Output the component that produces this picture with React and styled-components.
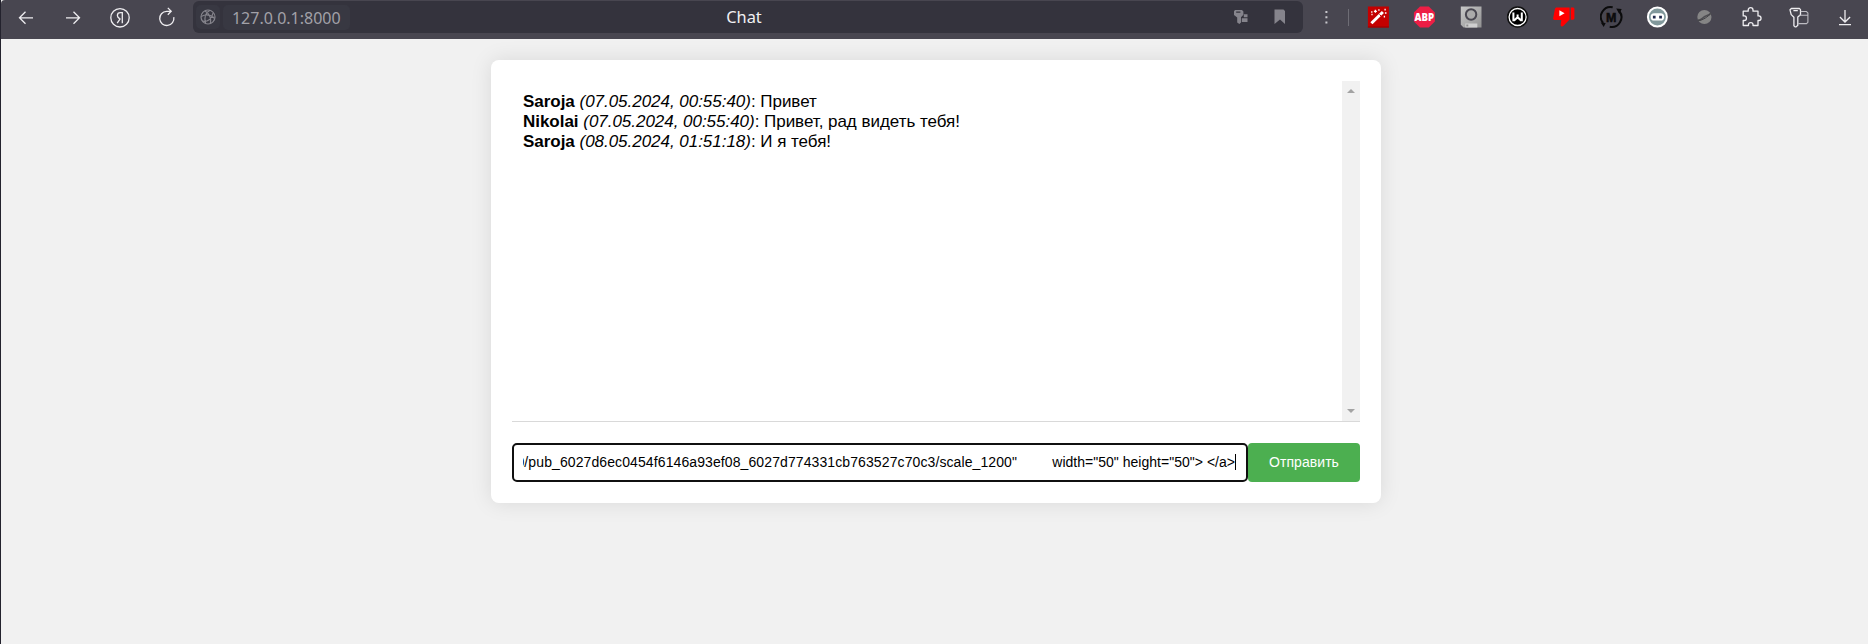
import React from "react";
import styled, { createGlobalStyle } from "styled-components";

const GlobalStyle = createGlobalStyle`
  * { box-sizing: border-box; }
  body { margin: 0; background: #f1f1f1; font-family: "Liberation Sans", Arial, sans-serif; }
`;

const Window = styled.div`
  height: 644px;
  border-left: 1px solid #23222d;
  background: #f1f1f1;
  overflow: hidden;
`;

const Toolbar = styled.header`
  display: flex;
  align-items: flex-start;
  height: 39px;
  padding-left: 2px;
  background: #484650;
  border-radius: 4px 0 0 0;
`;

const IconStrip = styled.nav`
  display: grid;
  grid-template-columns: repeat(${(p) => p.$count}, 46.6px);
  justify-items: center;
  align-items: center;
  height: 33px;
  flex: none;
`;

const IconButton = styled.button`
  display: flex;
  padding: 0;
  border: 0;
  background: none;
`;

const Icon = styled.svg`
  display: block;
  width: 24px;
  height: 24px;
  fill: none;
  stroke: ${(p) => p.$color || "#eeedf0"};
  stroke-width: ${(p) => p.$weight || 1.3};
`;

const AddressBar = styled.div`
  display: grid;
  grid-template-columns: 1fr auto 1fr;
  align-items: center;
  width: 1110px;
  height: 32px;
  margin: 1px 0 0 3.6px;
  padding: 0 11px 0 3px;
  border-radius: 6px;
  background: #34333d;
`;

const SiteInfo = styled.div`
  display: flex;
  align-items: center;
  gap: 3px;
`;

const SiteTile = styled.div`
  display: flex;
  align-items: center;
  justify-content: center;
  width: 24px;
  height: 24px;
  border-radius: 5px;
  background: #383842;
`;

const Url = styled.div`
  height: 25px;
  padding: 0 9px;
  border-radius: 5px;
  background: #383842;
  color: #a2a1a8;
  font: 16px/27px "Noto Sans", "Open Sans", sans-serif;
`;

const PageTitle = styled.div`
  color: #f0f0f2;
  font: 16.4px/30px "Noto Sans", "Open Sans", sans-serif;
  padding-left: 0;
`;

const AddressActions = styled.div`
  display: flex;
  justify-content: flex-end;
  gap: 15px;
`;

const MenuArea = styled.div`
  display: flex;
  align-items: center;
  flex: 1;
  height: 33px;
  padding-left: 11px;
`;

const Divider = styled.i`
  width: 1px;
  height: 17px;
  margin: 2px 0 0 10px;
  background: #6e6d75;
`;

const Card = styled.main`
  display: flex;
  flex-direction: column;
  width: 890px;
  height: 443px;
  margin: 21px 0 0 490px;
  padding: 21px;
  border-radius: 8px;
  background: #fff;
  box-shadow: 0 0 21px rgba(0, 0, 0, 0.1);
`;

const ChatLog = styled.section`
  display: flex;
  flex: none;
  height: 341px;
  border-bottom: 1px solid #d9d9d9;
`;

const Messages = styled.div`
  flex: 1;
  padding: 11px;
  color: #000;
  font-size: 17px;
  line-height: 20px;
  letter-spacing: -0.03px;
`;

const Message = styled.div`
  white-space: nowrap;
`;

const Scrollbar = styled.div`
  display: flex;
  flex-direction: column;
  justify-content: space-between;
  align-items: center;
  width: 18px;
  padding: 8px 0;
  background: #f1f1f1;
`;

const Arrow = styled.i`
  width: 0;
  height: 0;
  border: 4px solid transparent;
  border-top-width: ${(p) => (p.$up ? 0 : "4px")};
  border-bottom-width: ${(p) => (p.$up ? "4px" : 0)};
  border-${(p) => (p.$up ? "bottom" : "top")}-color: #a3a3a3;
`;

const Composer = styled.form`
  display: flex;
  flex: none;
  height: 39px;
  margin-top: 21px;
`;

const Field = styled.div`
  width: 736px;
  padding: 0 10px 0 9px;
  border: 2px solid #101010;
  border-radius: 5px;
  background: #fff;
`;

const FieldText = styled.div`
  display: flex;
  justify-content: flex-end;
  align-items: center;
  height: 35px;
  padding-bottom: 2px;
  overflow: hidden;
  white-space: pre;
  font-size: 14px;
  color: #000;
`;

const FieldPart = styled.span`
  flex: none;
  letter-spacing: ${(p) => p.$tracking};
`;

const Caret = styled.i`
  flex: none;
  width: 1px;
  height: 16px;
  background: #000;
`;

const SendButton = styled.button`
  width: 112px;
  padding: 0 0 2px;
  border: 0;
  border-radius: 4px;
  background: #4caf50;
  color: #fff;
  font: 14px "Liberation Sans", Arial, sans-serif;
  letter-spacing: 0.05px;
`;

const messages = [
  { name: "Saroja", time: "07.05.2024, 00:55:40", text: "Привет" },
  { name: "Nikolai", time: "07.05.2024, 00:55:40", text: "Привет, рад видеть тебя!" },
  { name: "Saroja", time: "08.05.2024, 01:51:18", text: "И я тебя!" },
];

const navIcons = [
  <Icon key="back" viewBox="0 0 24 24"><path d="M19 12.8H5.5M11.5 6.8l-6 6 6 6" /></Icon>,
  <Icon key="forward" viewBox="0 0 24 24"><path d="M5 12.8h13.5M12.5 6.8l6 6-6 6" /></Icon>,
  <Icon key="ya" viewBox="-1 0 24 24">
    <circle cx="12" cy="12.8" r="9.2" />
    <path d="M14.3 18.2V7.7h-1.9c-2 0-3 1.1-3 2.7 0 1.5.8 2.3 2.1 3.2l1 .6M12.3 13.6l-3.1 4.6" />
  </Icon>,
  <Icon key="reload" viewBox="-1 0 24 24">
    <path d="M18.8 12.2A7.1 7.1 0 1 1 11.5 6.3h4.6M12.8 2.9l3.4 3.4-3.4 3.4" />
  </Icon>,
];

const extensionIcons = [
  <Icon key="wand" viewBox="0.6 0 24 24" $color="#fff">
    <path fill="#c40000" stroke="none" d="M1.5 1.5h21v21h-21z" />
    <path fill="#970000" stroke="none" d="M1.5 21.5h21v1h-21z" />
    <path strokeWidth="3" d="M5 18.2L16.5 7" />
    <path stroke="#c40000" strokeWidth="1" d="M13.1 9.4l1.5 1.6" />
    <path strokeWidth="1.3" d="M9 4.8v3M7.5 6.3h3M12.5 4.2v1.6M5.4 6.2v1.6M18.7 3.8v1.6M18 10.8v1.6M18.5 8h1.6M5 9.5h1.2" />
  </Icon>,
  <Icon key="abp" viewBox="0.6 0 24 24" $color="none">
    <path fill="#ed1e45" d="M7.6 1.5h8.8l6.1 6.1v8.8l-6.1 6.1H7.6l-6.1-6.1V7.6z" />
    <text x="12" y="16" textAnchor="middle" fill="#fff" fontFamily="Open Sans, sans-serif" fontWeight="800" fontSize="10.6" textLength="19.6" lengthAdjust="spacingAndGlyphs">ABP</text>
  </Icon>,
  <Icon key="disk" viewBox="1.2 0 24 24">
    <defs>
      <linearGradient id="metal" x1="0" y1="0" x2="1" y2="1">
        <stop offset="0" stopColor="#c8c8c8" /><stop offset="1" stopColor="#929292" />
      </linearGradient>
    </defs>
    <path fill="url(#metal)" stroke="none" d="M2 1.5h20.7v21H4.8L2 19.8z" />
    <circle cx="12.3" cy="9.5" r="5.2" stroke="#494751" strokeWidth="2" fill="#aaa" />
    <path fill="#cfcfcf" stroke="none" d="M6.5 18.5h12v4h-12z" />
    <path fill="#8d8d8d" stroke="none" d="M7.5 19.5h2v2h-2z" />
  </Icon>,
  <Icon key="w" viewBox="1.4 0 24 24" $color="#fff">
    <circle cx="12" cy="12" r="10.1" fill="#000" stroke="#111" />
    <circle cx="12" cy="12" r="8.5" strokeWidth="1.3" />
    <path strokeWidth="2" d="M7.8 7.6v7.6h1l3.2-3 3.2 3h1V7.6M12 9.6v3" />
  </Icon>,
  <Icon key="dislike" viewBox="1.2 0 24 24" $color="none">
    <path fill="#f00" d="M5 2.5h12.8v12L11.5 21c-1 1-2.8.4-2.7-1.1l.7-5H2.8c-1.1 0-1.7-.8-1.4-1.8L3.1 4c.2-.9.9-1.5 1.9-1.5zM19 2.5h2.2c.8 0 1.4.6 1.4 1.4v9.4c0 .8-.6 1.4-1.4 1.4H19z" />
    <path fill="#fff" d="M7.6 5.3v6l5.2-3z" />
  </Icon>,
  <Icon key="m" viewBox="0.8 0 24 24" $color="#0b0b0c">
    <path strokeWidth="2" d="M13.5 2.2A9.8 9.8 0 0 0 3.9 18M10.5 21.8A9.8 9.8 0 0 0 20 6" />
    <path fill="#0b0b0c" stroke="none" d="M17 3.5l5.5.4-2.4 5zM1.5 17.5l5 .5-2 3.9z" />
    <text x="12" y="16.5" textAnchor="middle" fill="#0b0b0c" stroke="#0b0b0c" strokeWidth=".5" fontFamily="Liberation Sans, sans-serif" fontWeight="700" fontSize="12.5">M</text>
  </Icon>,
  <Icon key="robot" viewBox="0.6 0 24 24" $color="#fff">
    <circle cx="12" cy="12" r="9.5" fill="#81989b" strokeWidth="2" />
    <rect x="5.2" y="8.2" width="13.6" height="7.4" rx="3.7" fill="#fff" stroke="none" />
    <path fill="#202a4c" stroke="none" d="M7.5 10.8h2.7v2.7H7.5zM13.8 10.8h2.7v2.7h-2.7z" />
  </Icon>,
  <Icon key="sphere" viewBox="0.6 0 24 24" $color="#55555a">
    <circle cx="12" cy="12" r="7.1" fill="#858585" stroke="none" />
    <path stroke="#4e4e52" strokeWidth="1.7" d="M5.2 15.4c3 .2 4.4-1.8 6.3-3.3 2-1.6 4.2-1.1 7.1-4" />
    <path stroke="#444448" strokeWidth="1" d="M5.3 15.2c2.2 1.2 8.6-1.9 12.4-6.1" />
  </Icon>,
  <Icon key="extensions" viewBox="1 0 24 24">
    <path strokeLinejoin="round" d="M4.2 6.2h5V5.1c0-3.2 4.8-3.2 4.8 0v1.1h5v4.7h.8c3 0 3 4.6 0 4.6H19v5h-5v-1c0-2.5-4.5-2.5-4.5 0v1H4.2v-5h1.2c2.7 0 2.7-4.6 0-4.6H4.2z" />
  </Icon>,
  <Icon key="passwords" viewBox="-1.2 0 24 24">
    <path strokeLinejoin="round" d="M4.2 3.5h8l1.1 1.1v5.1L10.6 12v8.2l-1.7 1.7h-1l-1.2-1.2v-8.4L4 9.6 2.8 4.8zM6.2 5.7h4.4" />
    <path stroke="#bdbcc2" strokeWidth="1.1" d="M13.5 6.5h5.7l1.5 1.4v9.4l-1.4 1.3h-8.2M12.2 10.2h8.3" />
  </Icon>,
  <Icon key="downloads" viewBox="0 0 24 24"><path d="M12 5v12M6.9 12l5.1 5 5.1-5M6 19.6h12" /></Icon>,
];

export default function App() {
  return (
    <>
      <GlobalStyle />
      <Window>
        <Toolbar>
          <IconStrip $count={4}>
            {navIcons.map((icon) => <IconButton key={icon.key}>{icon}</IconButton>)}
          </IconStrip>
          <AddressBar>
            <SiteInfo>
              <SiteTile>
                <Icon viewBox="0 0 24 24" $color="#85848c" $weight={1.2}>
                  <circle cx="12" cy="12" r="7" />
                  <path d="M5.2 11.5c4.3-2.3 9.5-1.7 13.5 2M6.6 16.2c5 .8 9.2-2.2 10.4-8M14 5.2C9.6 7.5 8 12.5 9.6 18.6M8.8 5.7c4.6 3 6.6 7.4 5.6 13" />
                </Icon>
              </SiteTile>
              <Url>127.0.0.1:8000</Url>
            </SiteInfo>
            <PageTitle>Chat</PageTitle>
            <AddressActions>
              <Icon viewBox="0 0 24 24" $color="none">
                <path fill="#85848c" fillRule="evenodd" d="M6 5h7l1.4 1.4v3.4L12 12.2v5.3L10.4 19 8.2 17.5v-5L5 10V6.3zM7.2 6.5v1.3h4.2V6.5z" />
                <path fill="#85848c" d="M14.8 9.3h3.7v3h-3.7zM12.8 13.2h5.7v3.7h-5.7z" />
              </Icon>
              <Icon viewBox="0 0 24 24" $color="none"><path fill="#85848c" d="M6.5 4.5h9L17 6v13l-5-4.6L6.5 19z" /></Icon>
            </AddressActions>
          </AddressBar>
          <MenuArea>
            <Icon viewBox="0 0 24 24" $color="none">
              <path fill="#c8c7cc" d="M11.4 6h2v2h-2zM11.4 11.2h2v2h-2zM11.4 16.4h2v2h-2z" />
            </Icon>
            <Divider />
          </MenuArea>
          <IconStrip $count={11}>
            {extensionIcons.map((icon) => <IconButton key={icon.key}>{icon}</IconButton>)}
          </IconStrip>
        </Toolbar>
        <Card>
          <ChatLog>
            <Messages>
              {messages.map((m) => (
                <Message key={m.time + m.name}>
                  <b>{m.name}</b> <em>({m.time})</em>: {m.text}
                </Message>
              ))}
            </Messages>
            <Scrollbar><Arrow $up /><Arrow /></Scrollbar>
          </ChatLog>
          <Composer>
            <Field>
              <FieldText>
                <FieldPart $tracking="0.1px">{'0/pub_6027d6ec0454f6146a93ef08_6027d774331cb763527c70c3/scale_1200"'}</FieldPart>
                <FieldPart $tracking="0.02px">{'         width="50" height="50"> </a>'}</FieldPart>
                <Caret />
              </FieldText>
            </Field>
            <SendButton type="button">Отправить</SendButton>
          </Composer>
        </Card>
      </Window>
    </>
  );
}
